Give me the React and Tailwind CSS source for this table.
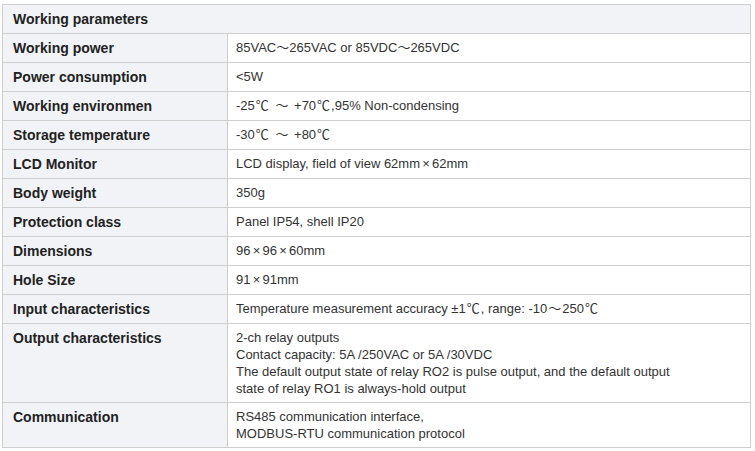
const Sym = ({ c, w = 'w-[13px]' }) => (
  <span className={`inline-block text-center ${w}`}>{c}</span>
);

const C = () => <Sym c="℃" w="w-[15px]" />;
const X = () => <Sym c="×" w="w-[12px]" />;

const rows = [
  ['Working power', [<>85VAC<Sym c="～" />265VAC or 85VDC<Sym c="～" />265VDC</>]],
  ['Power consumption', ['<5W']],
  ['Working environmen', [<>-25<C /> <Sym c="～" w="w-[17px]" /> +70<C />,95% Non-condensing</>]],
  ['Storage temperature', [<>-30<C /> <Sym c="～" w="w-[17px]" /> +80<C /></>]],
  ['LCD Monitor', [<>LCD display, field of view 62mm<X />62mm</>]],
  ['Body weight', ['350g']],
  ['Protection class', ['Panel IP54, shell IP20']],
  ['Dimensions', [<>96<X />96<X />60mm</>]],
  ['Hole Size', [<>91<X />91mm</>]],
  ['Input characteristics', [<>Temperature measurement accuracy ±1<C />, range: -10<Sym c="～" w="w-[15px]" />250<C /></>]],
  [
    'Output characteristics',
    [
      '2-ch relay outputs',
      'Contact capacity: 5A /250VAC or 5A /30VDC',
      'The default output state of relay RO2 is pulse output, and the default output',
      'state of relay RO1 is always-hold output',
    ],
  ],
  ['Communication', ['RS485 communication interface,', 'MODBUS-RTU communication protocol']],
];

const App = () => {
  return (
    <div
      className="min-h-[451px] bg-white pl-[2px] pt-[4px]"
      style={{ fontFamily: '"Liberation Sans", Arial, "Noto Sans CJK SC", sans-serif' }}
    >
      <table className="w-[749px] table-fixed border-collapse border border-[#cfcfcf]">
        <colgroup>
          <col className="w-[225px]" />
          <col />
        </colgroup>
        <tbody>
          <tr>
            <td
              colSpan={2}
              className="border border-[#cfcfcf] bg-[#f2f3f7] px-[10px] py-[5px] align-top text-[14px] font-bold leading-[18px] text-[#222]"
            >
              Working parameters
            </td>
          </tr>
          {rows.map(([label, lines]) => (
            <tr key={label}>
              <td className="border border-[#cfcfcf] bg-[#f2f3f7] px-[10px] py-[5px] align-top text-[14px] font-bold leading-[18px] text-[#222]">
                {label}
              </td>
              <td className="border border-[#cfcfcf] bg-white py-[5px] pl-[8px] pr-[10px] align-top text-[13px] leading-[17px] text-[#333]">
                {lines.map((l, i) => (
                  <div key={i} className="whitespace-nowrap">{l}</div>
                ))}
              </td>
            </tr>
          ))}
        </tbody>
      </table>
    </div>
  );
};

export default App;
